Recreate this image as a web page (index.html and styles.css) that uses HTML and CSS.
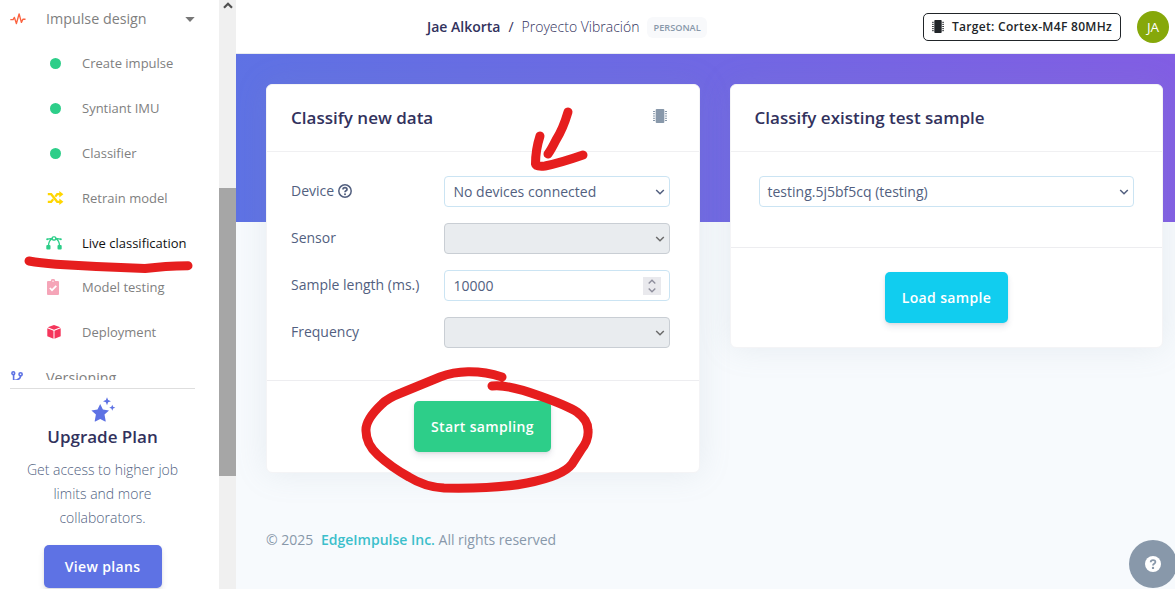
FILE: index.html
```html
<!DOCTYPE html>
<html lang="en">
<head>
<meta charset="utf-8">
<title>Live classification</title>
<link rel="stylesheet" href="styles.css">
</head>
<body>
<svg class="defs" width="0" height="0">
  <symbol id="chip" viewBox="0 0 14 14">
    <rect x="2.7" y="0" width="8.6" height="14" rx="1"/>
    <path d="M0 2.5h2.1M0 4.7h2.1M0 7h2.1M0 9.3h2.1M0 11.5h2.1M11.9 2.500H14M11.900 4.700H14M11.900 7H14M11.900 9.300H14M11.900 11.500H14" stroke="currentColor" stroke-width="1"/>
  </symbol>
  <symbol id="chevron" viewBox="0 0 10 6"><path d="M1.2 1 5 4.8 8.8 1" fill="none" stroke="currentColor" stroke-width="1.5"/></symbol>
</svg>
<div class="app">
  <aside class="sidebar">
    <nav class="nav">
      <div class="nav-item top">
        <svg class="ic-top" width="16" height="12" viewBox="0 0 16 12"><path d="M.3 6.6h2.8l1.3-2.2 2 6.2L9.1.9l2.3 8.5 1.5-3.2h2.6" fill="none" stroke="#fb6340" stroke-width="1.4" stroke-linejoin="round"/></svg>
        <span>Impulse design</span>
        <svg class="caret" width="10" height="5" viewBox="0 0 10 5"><path d="M.3 0h9.4L5 5z" fill="#777"/></svg>
      </div>
      <div class="nav-item sub"><i class="slot"><b class="dot"></b></i><span>Create impulse</span></div>
      <div class="nav-item sub"><i class="slot"><b class="dot"></b></i><span>Syntiant IMU</span></div>
      <div class="nav-item sub"><i class="slot"><b class="dot"></b></i><span>Classifier</span></div>
      <div class="nav-item sub"><i class="slot"><svg width="17" height="14" viewBox="0 0 17 14"><path d="M.8 3.2h3.4l6 7.600h3.300M.8 10.800h3.400l2-2.500M8.300 5.600l1.900-2.400h3.300" fill="none" stroke="#ffd600" stroke-width="2.200"/><path d="M12.300 0 16.400 3.200 12.300 6.600zM12.300 7.500 16.400 10.800 12.300 14z" fill="#ffd600"/></svg></i><span>Retrain model</span></div>
      <div class="nav-item sub active"><i class="slot live"><svg width="16" height="14" viewBox="0 0 16 14"><g fill="none" stroke="#2dce89" stroke-width="1.300"><path d="M2.500 9.400C2.700 6 4.300 3.600 6.300 2.600M13.500 9.400C13.300 6 11.700 3.600 9.700 2.600M1.500 3.200 6.200 2.500M9.800 2.500l4.700.7"/><rect x="6.300" y=".8" width="3.400" height="3.200" rx="1"/></g><g fill="#2dce89"><circle cx="1.200" cy="3.200" r="1"/><circle cx="14.800" cy="3.200" r="1"/><rect x=".3" y="9" width="4.200" height="4.500" rx="1"/><rect x="11.500" y="9" width="4.200" height="4.500" rx="1"/></g></svg></i><span>Live classification</span></div>
      <div class="nav-item sub"><i class="slot left"><svg width="12" height="16" viewBox="0 0 12 16"><path d="M1.300 2h2.500a2.200 2.200 0 0 1 4.400 0h2.500c.8 0 1.300.5 1.300 1.300v11.400c0 .8-.5 1.300-1.300 1.300H1.300C.5 16 0 15.500 0 14.700V3.300C0 2.500.5 2 1.300 2z" fill="#f5a5b8"/><path d="m2.800 9 2.200 2.200 4.300-4.300" fill="none" stroke="#fff" stroke-width="1.700"/><circle cx="6" cy="2.200" r=".7" fill="#fff"/></svg></i><span>Model testing</span></div>
      <div class="nav-item sub"><i class="slot left"><svg width="14" height="14" viewBox="0 0 14 14"><path d="M7 0l6.300 2.300L7 4.800.7 2.300zM.3 3.300l6.200 2.400v8.100L.3 11.300zM13.700 3.300 7.500 5.700v8.100l6.200-2.500z" fill="#f5365c"/></svg></i><span>Deployment</span></div>
      <div class="nav-item top version">
        <svg class="ic-top" width="13" height="13" viewBox="0 0 13 13"><g fill="none" stroke="#5e72e4" stroke-width="1.600"><circle cx="2.300" cy="2.200" r="1.400"/><circle cx="9.600" cy="3.300" r="1.600"/><path d="M2.600 3.600v5.700q3.600.2 4.700-1.200 1.900-.4 2.300-3.200"/></g></svg>
        <span>Versioning</span>
      </div>
    </nav>
    <section class="upgrade">
      <svg class="stars" width="26" height="25" viewBox="0 0 26 25" fill="#5e72e4"><path d="m10.200 7 2.700 5.600 6.100.8-4.500 4.200 1.200 6.300q.1.700-.6.500l-4.900-2.500-4.900 2.500q-.7.200-.6-.5l1.200-6.300L1.400 13.400l6.100-.8zM17 .2l1.100 2.900L21 4.200l-2.900 1.100L17 8.200l-1.100-2.900L13 4.200l2.900-1.100zM22.300 7.800l.8 2 2.200.9-2.200.9-.8 2.200-.9-2.200-2.100-.9 2.100-.9z"/></svg>
      <h3>Upgrade Plan</h3>
      <p>Get access to higher job limits and more collaborators.</p>
      <button class="btn plans">View plans</button>
    </section>
  </aside>
  <div class="scrollbar"><svg width="10" height="7" viewBox="0 0 10 7"><path d="M1 5.700 5 1.700 9 5.700" fill="none" stroke="#505050" stroke-width="2.200"/></svg><div class="thumb"></div></div>
  <main class="main">
    <header class="topbar">
      <div class="crumbs"><strong>Jae Alkorta</strong><span class="slash">/</span><span class="project">Proyecto Vibración</span><span class="badge">PERSONAL</span></div>
      <div class="target"><svg width="12" height="13" viewBox="0 0 14 14" preserveAspectRatio="none"><use href="#chip"/></svg><span>Target: Cortex-M4F 80MHz</span></div>
      <div class="avatar">JA</div>
    </header>
    <div class="content">
      <section class="card">
        <div class="card-head"><h2>Classify new data</h2><svg class="chip" width="14" height="14"><use href="#chip"/></svg></div>
        <div class="card-body form">
          <div class="row"><label>Device <svg width="14" height="14" viewBox="0 0 14 14"><circle cx="7" cy="7" r="6.200" fill="none" stroke="#525f7f" stroke-width="1.500"/><path d="M5 5.500C5 3 9 3.100 9 5.400 9 6.900 7 6.700 7 8.200" fill="none" stroke="#525f7f" stroke-width="1.700"/><circle cx="7" cy="10.200" r="1" fill="#525f7f"/></svg></label><div class="control"><span>No devices connected</span><svg width="10" height="6"><use href="#chevron"/></svg></div></div>
          <div class="row"><label>Sensor</label><div class="control disabled"><span></span><svg width="10" height="6"><use href="#chevron"/></svg></div></div>
          <div class="row"><label>Sample length (ms.)</label><div class="control number"><span>10000</span><div class="spin"><svg width="8" height="14" viewBox="0 0 8 14"><path d="M.7 4.500 4 1.300l3.300 3.200M.7 9.500 4 12.700l3.300-3.200" fill="none" stroke="#8f8f9d" stroke-width="1.400"/></svg></div></div></div>
          <div class="row"><label>Frequency</label><div class="control disabled"><span></span><svg width="10" height="6"><use href="#chevron"/></svg></div></div>
        </div>
        <div class="card-foot"><button class="btn start">Start sampling</button></div>
      </section>
      <section class="card existing">
        <div class="card-head"><h2>Classify existing test sample</h2></div>
        <div class="card-body"><div class="control"><span>testing.5j5bf5cq (testing)</span><svg width="10" height="6"><use href="#chevron"/></svg></div></div>
        <div class="card-foot"><button class="btn load">Load sample</button></div>
      </section>
    </div>
    <footer class="footer">© 2025 <strong>EdgeImpulse Inc.</strong> All rights reserved</footer>
  </main>
</div>
<div class="help"><svg width="16" height="16" viewBox="0 0 16 16"><circle cx="8" cy="8" r="8" fill="#fff"/><path d="M5.700 6.200C5.700 3.400 10.400 3.400 10.400 6.100 10.400 7.900 8 7.700 8 9.400" fill="none" stroke="#8898aa" stroke-width="1.800"/><circle cx="8" cy="11.900" r="1.200" fill="#8898aa"/></svg></div>
<svg class="marks" width="1175" height="589" viewBox="0 0 1175 589">
  <path d="M29 261Q40 263 56 264.200 100 267 145 268.500 165 266 188 265.700"/>
  <path d="M568 112Q563 129 556 140 551 150 548 154"/>
  <path d="M540 136Q535.500 150 535.500 164 536 167 545 166 560 163 583 155"/>
  <path d="M502 377Q485 371.500 468 371.800 453 372 440 377L401 393Q388 398 382 404 365 420 366 431 366 444 378 455 391 467 409 477 425 487 444 488 497 489 527 483 563 476 572 464L581 450Q589 440 588 430 588 420 577 412 568 406 540 396 507 384 492 386"/>
</svg>
</body>
</html>
```

FILE: styles.css
```css
* { box-sizing: border-box; }
body { margin: 0; font-family: "Open Sans", "Noto Sans", sans-serif; font-size: 14px; color: #525f7f; overflow: hidden; }
h2, h3, p { margin: 0; }
svg { flex: none; }
.defs { display: none; }
.app { display: flex; height: 589px; }

.sidebar { width: 219px; background: #fff; flex: none; }
.nav { height: 380px; overflow: hidden; }
.nav-item { display: flex; align-items: center; height: 44.800px; color: #7f7f7f; font-size: 13px; white-space: nowrap; }
.nav-item.top { font-size: 14.300px; padding-left: 10px; height: 41px; padding-bottom: 4px; }
.nav-item .ic-top { margin-right: 20px; }
.nav-item.version { height: 46px; padding: 0 0 0 11px; }
.nav-item.version .ic-top { margin: 0 22px 1px 0; }
.caret { margin: 2px 0 0 38px; }
.sub { padding-left: 46px; }
.slot { width: 18px; margin-right: 18px; display: flex; justify-content: center; }
.slot.left { justify-content: flex-start; padding-left: 1px; }
.slot.live { justify-content: flex-start; }
.dot { width: 11px; height: 11px; border-radius: 50%; background: #2dce89; margin-top: 1px; }
.active { color: #111; }

.upgrade { margin: 8px 24px 0 10px; border-top: 1px solid #dedede; display: flex; flex-direction: column; align-items: center; text-align: center; }
.stars { margin-top: 8px; }
.upgrade h3 { font-size: 17px; line-height: 24px; font-weight: 600; color: #32325d; margin-top: 3px; }
.upgrade p { font-size: 14px; line-height: 24px; font-weight: 300; margin-top: 9px; width: 160px; }

.btn { border: 0; border-radius: 5px; color: #fff; font: 600 14px "Open Sans", sans-serif; letter-spacing: .35px; padding: 0; box-shadow: 0 4px 6px rgba(50,50,93,.11), 0 1px 3px rgba(0,0,0,.08); }
.plans { width: 118px; height: 43px; background: #5e72e4; margin-top: 15px; }
.start { width: 137px; height: 51px; background: #2dce89; }
.load { width: 123px; height: 51px; background: #11cdef; }

.scrollbar { width: 17px; flex: none; background: #f0f0f0; display: flex; flex-direction: column; align-items: center; padding-top: 2px; }
.thumb { width: 17px; height: 288px; margin-top: 179px; background: #a6a6a6; }

.main { flex: 1; background: linear-gradient(87deg, #5e72e4, #825ee4) 0 54px / 100% 168px no-repeat, #f7fafd; }
.topbar { height: 54px; background: #fff; border-bottom: 1px solid #e9ecef; display: flex; align-items: center; padding-right: 6px; }
.crumbs { display: flex; align-items: center; margin-left: 191px; color: #32325d; white-space: nowrap; }
.crumbs strong { font-weight: 600; }
.slash { margin: 0 8px; }
.project { font-weight: 300; }
.badge { font-size: 9.200px; font-weight: 600; color: #8898aa; background: #f8f9fb; border-radius: 6px; height: 21px; line-height: 21px; padding: 0 6px; margin: 1px 0 0 8px; }
.target { width: 198px; height: 28px; border: 1px solid #212529; border-radius: 5px; margin-left: auto; display: flex; align-items: center; padding-left: 8px; gap: 8px; color: #212529; fill: #212529; font-size: 12px; font-weight: 600; letter-spacing: .3px; white-space: nowrap; }
.avatar { width: 32px; height: 32px; margin-left: 16px; border-radius: 50%; background: #86a80a; color: #fff; display: flex; align-items: center; justify-content: center; font-size: 13.500px; }

.content { display: flex; align-items: flex-start; gap: 30px; padding: 30px 12px 0 30px; }
.card { width: 434px; background: #fff; border: 1px solid #f4f4f6; border-radius: 6px; box-shadow: 0 0 32px rgba(136,152,170,.15); }
.card.existing { width: 433px; }
.card-head { height: 67px; border-bottom: 1px solid #f0f0f2; padding: 0 32px 0 24px; display: flex; align-items: center; justify-content: space-between; }
.card-head h2 { font-size: 17px; line-height: 24px; font-weight: 600; color: #32325d; }
.existing .card-head { padding-left: 23.500px; }
.chip { color: #8898aa; fill: #8898aa; margin-bottom: 5px; }
.form { padding: 24px 29px 32px 24px; display: grid; gap: 16px; }
.row { display: flex; justify-content: space-between; height: 31px; }
label { line-height: 30px; white-space: nowrap; }
label svg { vertical-align: -2px; }
.control { width: 226px; height: 31px; border: 1px solid #cbe4f3; border-radius: 4px; display: flex; align-items: center; justify-content: space-between; padding: 0 4px 0 8.500px; color: #525f7f; background: #fff; }
.disabled { background: #e9ecef; border-color: #c9ced4; color: #6b6b6b; }
.number { padding-right: 8px; }
.spin { width: 18px; height: 18px; background: #e9e9ed; display: flex; align-items: center; justify-content: center; }
.card-foot { border-top: 1px solid #ededf0; height: 92px; display: flex; justify-content: center; padding: 20px 1px 0 0; }
.existing .card-body { height: 95px; padding: 24px 28px 0; }
.existing .control { width: 375px; padding-left: 7.500px; }
.existing .card-foot { height: 100px; padding: 24px 0 0; }
.footer { padding: 57px 0 0 30px; color: #8898aa; line-height: 20px; }
.footer strong { color: #3cbfcb; font-weight: 600; margin-left: 4px; }
.help { position: absolute; left: 1129px; top: 540px; width: 48px; height: 48px; border-radius: 50%; background: #8898aa; display: flex; align-items: center; justify-content: center; }
.marks { position: absolute; left: 0; top: 0; pointer-events: none; fill: none; stroke: #e61e1e; stroke-width: 9; stroke-linecap: round; stroke-linejoin: round; }
```
